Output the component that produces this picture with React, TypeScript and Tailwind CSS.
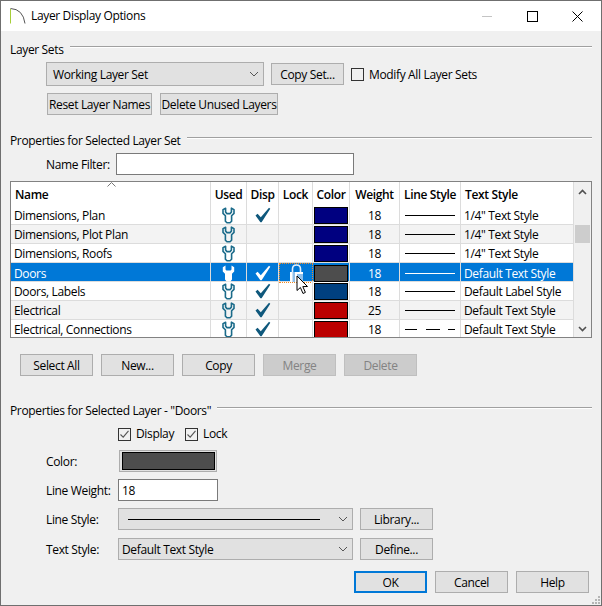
import React from "react";

const Btn = ({ children, className = "", disabled = false }: { children: React.ReactNode; className?: string; disabled?: boolean }) => (
  <div className={`flex h-[22px] shrink-0 items-center justify-center border pt-[2px] ${disabled ? "border-[#bfbfbf] bg-[#cccccc] text-[#838383]" : "border-[#adadad] bg-[#e1e1e1] text-black"} ${className}`}>
    {children}
  </div>
);

const Chevron = ({ className = "" }: { className?: string }) => (
  <svg width="10" height="6" viewBox="0 0 10 6" className={className}>
    <path d="M1 1 L5 5 L9 1" fill="none" stroke="#555" strokeWidth="1" />
  </svg>
);

const Heading = ({ children, className = "" }: { children: React.ReactNode; className?: string }) => (
  <div className={`flex h-4 items-center ${className}`}>
    <span className="whitespace-nowrap pt-[2px] leading-4">{children}</span>
    <div className="mb-[5px] ml-[6px] h-[2px] flex-1 border-t border-b border-t-[#a0a0a0] border-b-white" />
  </div>
);

const CheckBox = ({ checked = false }: { checked?: boolean }) => (
  <div className="flex h-[13px] w-[13px] shrink-0 items-center justify-center border border-[#333333] bg-transparent">
    {checked && (
      <svg width="11" height="11" viewBox="0 0 11 11">
        <path d="M1.5 5.5 L4.2 8.2 L9.5 1.8" fill="none" stroke="#555" strokeWidth="1.1" />
      </svg>
    )}
  </div>
);

const Wrench = ({ selected }: { selected: boolean }) => (
  <svg width="13" height="17" viewBox="0 0 13 17">
    <path
      d={
        selected
          ? "M3.5 0.5 L0.8 2.2 V6.6 L3 8.8 V14.6 L4.6 16.4 H8.4 L10 14.6 V8.8 L12.2 6.6 V2.2 L9.5 0.5 V4.4 L8.6 5.6 H4.4 L3.5 4.4 Z"
          : "M3.6 1.2 L1 2.6 V6.4 L3.4 8.8 V14.2 L5 15.8 H8 L9.6 14.2 V8.8 L12 6.4 V2.6 L9.4 1.2 V5 L8.2 6.6 H4.8 L3.6 5 Z"
      }
      fill={selected ? "#ffffff" : "none"}
      stroke={selected ? "none" : "#1b6b8a"}
      strokeWidth="1.6"
      strokeLinejoin="round"
    />
  </svg>
);

const Check = ({ selected }: { selected: boolean }) => (
  <svg width="16" height="16" viewBox="0 0 16 16">
    <path d="M0.5 8.5 L2.6 6.8 L5.8 10.2 L14 0.8 L15.3 1.8 L6.6 15.3 L5.4 15.3 Z" fill={selected ? "#ffffff" : "#0f587c"} />
  </svg>
);

const Lock = () => (
  <svg width="15" height="18" viewBox="0 0 15 18">
    <path d="M3.5 8 V5 Q3.5 1 7.5 1 Q11.5 1 11.5 5 V8" fill="none" stroke="#e4effa" strokeWidth="1.6" />
    <path d="M1 8 H14 V18 H1 Z" fill="#8fc0ea" />
    <path d="M1 8 H3.5 V18 H1 Z M6 8 H8 V18 H6 Z M8 8 H14 V10 H8 Z" fill="#ffffff" />
  </svg>
);

const rows = [
  { name: "Dimensions, Plan", disp: true, color: "bg-[#000080]", weight: "18", text: '1/4" Text Style' },
  { name: "Dimensions, Plot Plan", disp: false, color: "bg-[#000080]", weight: "18", text: '1/4" Text Style', alt: true },
  { name: "Dimensions, Roofs", disp: false, color: "bg-[#000080]", weight: "18", text: '1/4" Text Style' },
  { name: "Doors", disp: true, color: "bg-[#4d4d4d]", weight: "18", text: "Default Text Style", selected: true },
  { name: "Doors, Labels", disp: true, color: "bg-[#004080]", weight: "18", text: "Default Label Style" },
  { name: "Electrical", disp: true, color: "bg-[#bb0000]", weight: "25", text: "Default Text Style", alt: true },
  { name: "Electrical, Connections", disp: true, color: "bg-[#bb0000]", weight: "18", text: "Default Text Style", dashed: true },
];

const cols = "grid grid-cols-[200px_36px_32px_34px_37px_50px_61px_113px]";
const sep = "border-r border-[#dcdcdc]";

export default function App() {
  return (
    <div className="relative flex h-[606px] w-[602px] flex-col overflow-hidden border border-[#6f6f6f] bg-[#f0f0f0] font-['Open_Sans',sans-serif] text-[12px] leading-4 tracking-[-0.35px] text-black">
      {/* title bar */}
      <div className="flex h-[30px] shrink-0 items-center bg-white pl-[9px]">
        <svg width="16" height="16" viewBox="0 0 16 16" className="shrink-0">
          <path d="M0.5 0.5 Q13 1 15 15.5" fill="none" stroke="#555" strokeWidth="1" />
          <path d="M0.5 1 V15.5" fill="none" stroke="#a6ce39" strokeWidth="1" />
        </svg>
        <span className="ml-[5px]">Layer Display Options</span>
        <div className="ml-auto flex items-center">
          <div className="h-px w-[10px] bg-[#c4c4c4]" />
          <div className="ml-[35px] h-[11px] w-[11px] border border-black" />
          <svg width="11" height="11" viewBox="0 0 11 11" className="ml-[34px] mr-[18px]">
            <path d="M0.5 0.5 L10.5 10.5 M10.5 0.5 L0.5 10.5" stroke="#000" strokeWidth="1" />
          </svg>
        </div>
      </div>

      {/* content */}
      <div className="flex flex-1 flex-col pl-[9px] pr-[9px]">
        <Heading className="mt-[10px]">Layer Sets</Heading>

        <div className="mt-[5px] ml-[36px] flex h-6 items-center">
          <div className="flex h-6 w-[218px] items-center justify-between border border-[#adadad] bg-[#e1e1e1] pl-[6px] pr-[4px]">
            <span className="pt-[2px]">Working Layer Set</span>
            <Chevron />
          </div>
          <Btn className="ml-[7px] w-[73px]">Copy Set...</Btn>
          <div className="ml-[7px]"><CheckBox /></div>
          <span className="ml-[5px] pt-[2px]">Modify All Layer Sets</span>
        </div>

        <div className="mt-[7px] ml-[37px] flex gap-2">
          <Btn className="w-[105px]">Reset Layer Names</Btn>
          <Btn className="w-[118px]">Delete Unused Layers</Btn>
        </div>

        <Heading className="mt-[17px]">Properties for Selected Layer Set</Heading>

        <div className="mt-[5px] ml-[36px] flex h-[22px] items-center">
          <span className="w-[70px] pt-[2px]">Name Filter:</span>
          <div className="h-[22px] w-[238px] border border-[#7a7a7a] bg-white" />
        </div>

        {/* table */}
        <div className="relative mt-[6px] flex h-[157px] w-[582px] overflow-hidden border border-[#828282] bg-white">
          <div className="w-[563px] shrink-0">
            <div className={`${cols} relative h-6 font-semibold`}>
              <div className={`${sep} flex items-center pl-[4px] pt-[2px]`}>Name</div>
              <div className={`${sep} flex items-center justify-center pt-[2px]`}>Used</div>
              <div className={`${sep} flex items-center justify-center pt-[2px]`}>Disp</div>
              <div className={`${sep} flex items-center justify-center pt-[2px]`}>Lock</div>
              <div className={`${sep} flex items-center justify-center pt-[2px]`}>Color</div>
              <div className={`${sep} flex items-center justify-center pt-[2px]`}>Weight</div>
              <div className={`${sep} flex items-center justify-center pt-[2px]`}>Line Style</div>
              <div className={`${sep} flex items-center pl-[4px] pt-[2px]`}>Text Style</div>
              <svg width="9" height="5" viewBox="0 0 9 5" className="absolute left-[96px] top-0">
                <path d="M0.5 4.5 L4.5 0.5 L8.5 4.5" fill="none" stroke="#777" strokeWidth="1" />
              </svg>
            </div>
            {rows.map((r) => (
              <div
                key={r.name}
                className={`${cols} h-[19px] border-b border-[#dcdcdc] ${r.selected ? "bg-[#0078d7] text-white" : r.alt ? "bg-[#f3f3f3]" : "bg-white"}`}
              >
                <div className={`${sep} flex items-center pl-[3px] pt-[2px]`}>{r.name}</div>
                <div className={`${sep} flex items-center justify-center`}><Wrench selected={!!r.selected} /></div>
                <div className={`${sep} flex items-center justify-center`}>{r.disp && <Check selected={!!r.selected} />}</div>
                <div className={`${sep} flex items-center justify-center ${r.selected ? "border border-dotted border-[#f08a24]" : ""}`}>{r.selected && <Lock />}</div>
                <div className={`${sep} flex items-center justify-center`}>
                  <div className={`h-[17px] w-[34px] border border-black ${r.color}`} />
                </div>
                <div className={`${sep} flex items-center justify-center pt-[2px]`}>{r.weight}</div>
                <div className={`${sep} flex items-center justify-center`}>
                  {r.dashed ? (
                    <div className="flex w-[50px] justify-between">
                      <div className="h-px w-[12px] bg-black" />
                      <div className="h-px w-[14px] bg-black" />
                      <div className="h-px w-[7px] bg-black" />
                    </div>
                  ) : (
                    <div className={`h-px w-[50px] ${r.selected ? "bg-white" : "bg-black"}`} />
                  )}
                </div>
                <div className={`${sep} flex items-center pl-[3px] pt-[2px]`}>{r.text}</div>
              </div>
            ))}
          </div>
          {/* scrollbar */}
          <div className="relative flex w-[17px] shrink-0 flex-col items-center bg-[#f0f0f0]">
            <svg width="9" height="6" viewBox="0 0 9 6" className="mt-[7px]">
              <path d="M1 5 L4.5 1.5 L8 5" fill="none" stroke="#505050" strokeWidth="1.6" />
            </svg>
            <div className="mt-[30px] h-[18px] w-[15px] bg-[#cdcdcd]" />
            <svg width="9" height="6" viewBox="0 0 9 6" className="mt-[83px]">
              <path d="M1 1 L4.5 4.5 L8 1" fill="none" stroke="#505050" strokeWidth="1.6" />
            </svg>
          </div>
          {/* mouse cursor */}
          <svg width="13" height="20" viewBox="0 0 13 20" className="absolute left-[285px] top-[93px]">
            <path d="M1 1 V15.5 L4.4 12.5 L7 18.5 L9.4 17.4 L6.8 11.6 L11.5 11.5 Z" fill="#ffffff" stroke="#000000" strokeWidth="1" />
          </svg>
        </div>

        <div className="mt-4 ml-[10px] flex gap-2">
          <Btn className="w-[73px]">Select All</Btn>
          <Btn className="w-[73px]">New...</Btn>
          <Btn className="w-[73px]">Copy</Btn>
          <Btn className="w-[73px]" disabled>Merge</Btn>
          <Btn className="w-[73px]" disabled>Delete</Btn>
        </div>

        <Heading className="mt-[26px]">Properties for Selected Layer - "Doors"</Heading>

        <div className="mt-2 ml-[108px] flex h-4 items-center">
          <CheckBox checked />
          <span className="ml-[5px] w-[44px]">Display</span>
          <div className="ml-[5px]"><CheckBox checked /></div>
          <span className="ml-[5px]">Lock</span>
        </div>

        <div className="mt-2 ml-[36px] flex h-[22px] items-center">
          <span className="w-[73px] pt-[2px]">Color:</span>
          <div className="flex h-[22px] w-[98px] items-center justify-center border border-[#adadad] bg-[#e1e1e1]">
            <div className="h-[18px] w-[93px] border border-black bg-[#4d4d4d]" />
          </div>
        </div>

        <div className="mt-[7px] ml-[36px] flex h-[22px] items-center">
          <span className="w-[72px] whitespace-nowrap pt-[2px]">Line Weight:</span>
          <div className="flex h-[22px] w-[100px] items-center border border-[#7a7a7a] bg-white pl-[3px] pt-[2px]">18</div>
        </div>

        <div className="mt-[7px] ml-[36px] flex h-[22px] items-center">
          <span className="w-[72px] pt-[2px]">Line Style:</span>
          <div className="flex h-[22px] w-[235px] items-center border border-[#adadad] bg-[#e1e1e1] pl-[9px] pr-[4px]">
            <div className="h-px w-[192px] bg-black" />
            <Chevron className="ml-auto" />
          </div>
          <Btn className="ml-[7px] w-[73px]">Library...</Btn>
        </div>

        <div className="mt-2 ml-[36px] flex h-[22px] items-center">
          <span className="w-[72px] pt-[2px]">Text Style:</span>
          <div className="flex h-[22px] w-[235px] items-center border border-[#adadad] bg-[#e1e1e1] pl-[3px] pr-[4px]">
            <span className="pt-[2px]">Default Text Style</span>
            <Chevron className="ml-auto" />
          </div>
          <Btn className="ml-[7px] w-[73px]">Define...</Btn>
        </div>

        <div className="mt-[11px] flex justify-end gap-2 pr-[3px]">
          <Btn className="w-[73px] border-2 !border-[#0078d7]">OK</Btn>
          <Btn className="w-[73px]">Cancel</Btn>
          <Btn className="w-[73px]">Help</Btn>
        </div>
      </div>

      {/* resize grip */}
      <svg width="8" height="8" viewBox="0 0 8 8" className="absolute bottom-px right-px">
        <path d="M6 0h2v2h-2z M3 3h2v2h-2z M6 3h2v2h-2z M0 6h2v2h-2z M3 6h2v2h-2z M6 6h2v2h-2z" fill="#b5b5b5" />
      </svg>
    </div>
  );
}
